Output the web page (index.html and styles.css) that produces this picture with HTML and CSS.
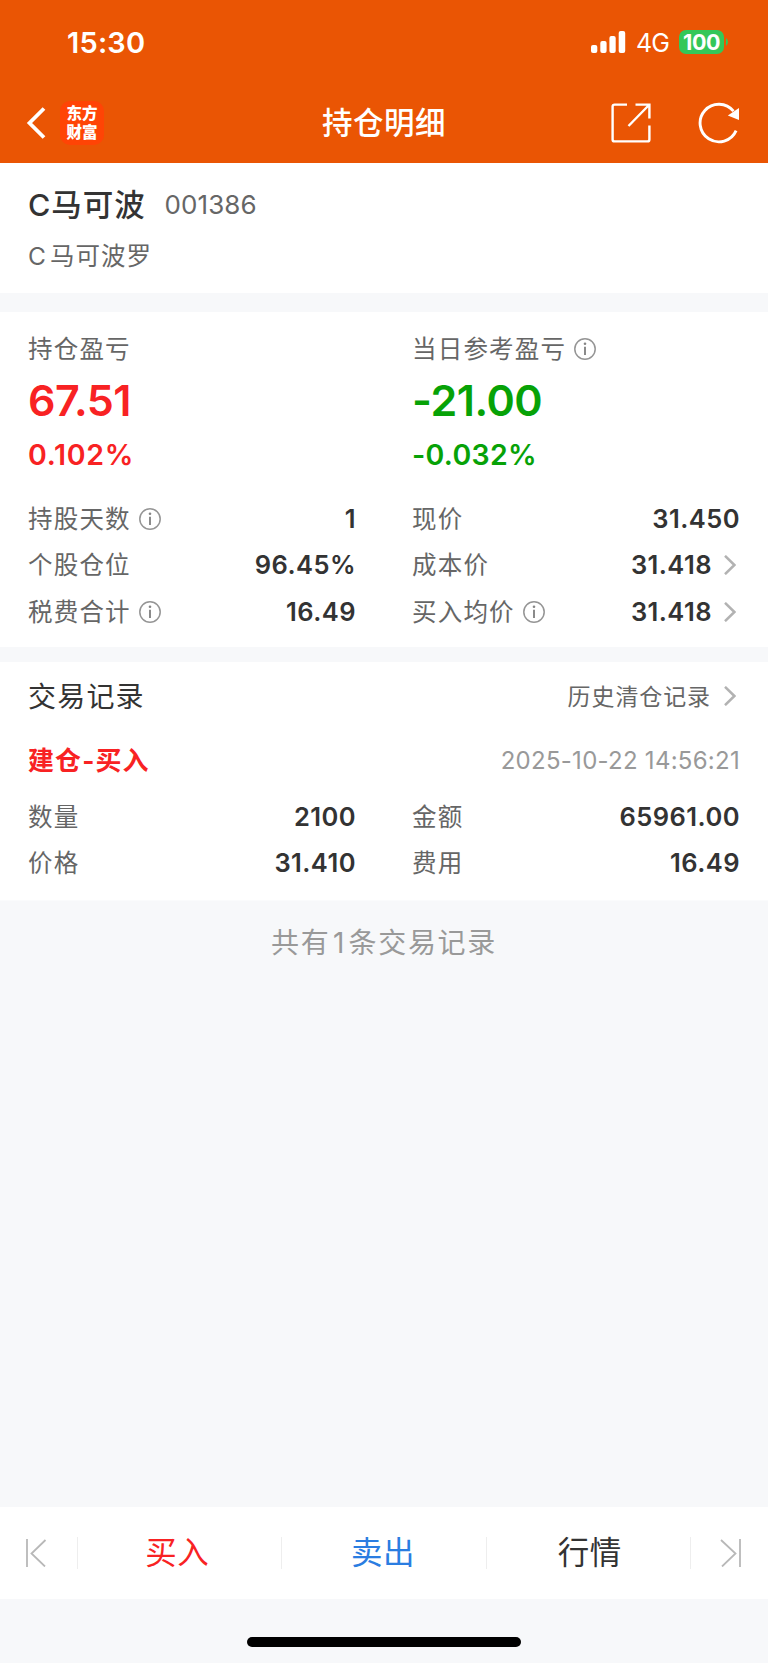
FILE: index.html
```html
<!DOCTYPE html>
<html lang="zh-CN">
<head>
<meta charset="utf-8">
<title>持仓明细</title>
<link rel="stylesheet" href="styles.css">
</head>
<body>
<svg class="defs" width="0" height="0">
  <symbol id="info" viewBox="0 0 22 22"><circle cx="11" cy="11" r="10.2" fill="none" stroke="#959595" stroke-width="1.5"/><path d="M11 8.8V17" stroke="#858585" stroke-width="1.9"/><circle cx="11" cy="5.7" r="1.3" fill="#858585"/></symbol>
  <symbol id="chev" viewBox="0 0 12 20"><path d="M1 .8L10.4 10L1 19.2" fill="none" stroke="#b2b2b2" stroke-width="2.5"/></symbol>
</svg>
<header class="header">
  <div class="status">
    <span class="time">15:30</span>
    <svg class="signal" width="35" height="22" viewBox="0 0 35 22" fill="#fff"><rect x="0" y="14" width="6.3" height="8" rx="2"/><rect x="9.3" y="10" width="6.3" height="12" rx="2"/><rect x="18.4" y="5" width="6.3" height="17" rx="2"/><rect x="27.7" y="0" width="6.5" height="22" rx="2"/></svg>
    <span class="net">4G</span>
    <span class="battery">100</span>
    <svg class="cap" width="2" height="8" viewBox="0 0 2 8"><path d="M0 0Q2 1.6 2 4T0 8Z" fill="#34c759"/></svg>
  </div>
  <nav class="nav">
    <div class="nav-left">
      <svg width="20" height="34" viewBox="0 0 20 34"><path d="M18 2.5L3.5 17L18 31.5" fill="none" stroke="#fff" stroke-width="3.8"/></svg>
      <div class="logo"><span>东方</span><span>财富</span></div>
    </div>
    <h1 class="title">持仓明细</h1>
    <div class="nav-right">
      <svg width="40" height="40" viewBox="0 0 40 40" fill="none" stroke="#fff" stroke-width="2.4"><path d="M16 1.6H3.6Q1.6 1.6 1.6 3.6V36.4Q1.6 38.4 3.6 38.4H36.4Q38.4 38.4 38.4 36.4V22.5M24.5 1.6H38.4V15.5M38 2L17.5 23"/></svg>
      <svg width="42" height="42" viewBox="0 0 42 42"><path d="M38.1 28.6A18.8 18.8 0 1 1 35.5 9.2" fill="none" stroke="#fff" stroke-width="2.9"/><path d="M41 6V18L29.8 13.6Z" fill="#fff"/></svg>
    </div>
  </nav>
</header>
<section class="stock">
  <div class="stock-head"><span class="stock-name">C马可波</span><span class="code">001386</span></div>
  <div class="full-name"><span class="latin">C</span>马可波罗</div>
</section>
<section class="position">
  <div class="cols">
    <div class="gain up">
      <div class="label">持仓盈亏</div><div class="big">67.51</div><div class="pct">0.102%</div>
    </div>
    <div class="gain down">
      <div class="label">当日参考盈亏<svg class="info"><use href="#info"/></svg></div><div class="big">-21.00</div><div class="pct">-0.032%</div>
    </div>
  </div>
  <div class="cols rows">
    <div class="row"><span class="label">持股天数<svg class="info"><use href="#info"/></svg></span><b>1</b></div>
    <div class="row"><span class="label">现价</span><b>31.450</b></div>
    <div class="row"><span class="label">个股仓位</span><b>96.45%</b></div>
    <div class="row"><span class="label">成本价</span><b>31.418</b><svg class="chev"><use href="#chev"/></svg></div>
    <div class="row"><span class="label">税费合计<svg class="info"><use href="#info"/></svg></span><b>16.49</b></div>
    <div class="row"><span class="label">买入均价<svg class="info"><use href="#info"/></svg></span><b>31.418</b><svg class="chev"><use href="#chev"/></svg></div>
  </div>
</section>
<section class="records">
  <div class="rec-head"><h2>交易记录</h2><span class="history">历史清仓记录</span><svg class="chev"><use href="#chev"/></svg></div>
  <div class="rec-line"><span class="kind">建仓-买入</span><time>2025-10-22 14:56:21</time></div>
  <div class="cols rows">
    <div class="row"><span class="label">数量</span><b>2100</b></div>
    <div class="row"><span class="label">金额</span><b>65961.00</b></div>
    <div class="row"><span class="label">价格</span><b>31.410</b></div>
    <div class="row"><span class="label">费用</span><b>16.49</b></div>
  </div>
</section>
<p class="total">共有<span>1</span>条交易记录</p>
<footer class="footer">
  <div class="tabs">
    <div class="edge"><svg width="22" height="28" viewBox="0 0 22 28" fill="none" stroke="#b8b8b8" stroke-width="1.8"><path d="M2 0V28M20.5 1L6.5 14.5L20 27.5"/></svg></div>
    <div class="tab buy">买入</div>
    <div class="tab sell">卖出</div>
    <div class="tab quote">行情</div>
    <div class="edge last"><svg width="22" height="28" viewBox="0 0 22 28" fill="none" stroke="#b8b8b8" stroke-width="1.8"><path d="M20 0V28M1 1L15.5 14.5L2 27.5"/></svg></div>
  </div>
  <div class="home"></div>
</footer>
</body>
</html>
```
FILE: styles.css
```css
* { box-sizing: border-box; margin: 0; padding: 0; }
body {
  width: 768px; height: 1663px; display: flex; flex-direction: column;
  background: #f7f8fa; color: #333; overflow: hidden;
  font-family: Inter, "Noto Sans CJK SC", sans-serif; font-size: 25px;
}
svg { display: block; flex: none; }
.defs { position: absolute; }
.header { height: 163.4px; background: #ea5504; color: #fff; flex: none; }
.status { height: 84px; display: flex; align-items: center; padding: 0 40px 0 67px; }
.time { font-size: 29px; font-weight: 600; letter-spacing: 0.2px; margin: 2px auto 0 0; line-height: 40px; }
.net { font-size: 25px; line-height: 30px; margin: 2px 0 0 10px; width: 33px; white-space: nowrap; letter-spacing: -.8px; }
.battery { width: 45px; height: 24px; margin-left: 10px; border-radius: 7px; background: #34c759; font-size: 21.5px; font-weight: 700; line-height: 24px; text-align: center; letter-spacing: -.5px; }
.cap { margin-left: 2px; }
.nav { height: 77px; display: grid; grid-template-columns: 1fr auto 1fr; align-items: center; padding: 0 28px 0 26px; }
.nav-left { display: flex; align-items: center; gap: 14px; }
.logo { width: 44px; height: 44px; border-radius: 10px; background: #ff4405; display: flex; flex-direction: column; align-items: center; justify-content: center; }
.logo span { font-size: 15.5px; font-weight: 900; line-height: 19px; }
.title { font-size: 30.5px; font-weight: 500; letter-spacing: .5px; line-height: 40px; padding-left: 2px; }
.nav-right { display: flex; justify-content: flex-end; align-items: center; gap: 47px; padding-top: 1px; }
.stock { height: 129.6px; background: #fff; padding: 19px 28px 0; flex: none; }
.stock-head { display: flex; align-items: center; height: 42px; }
.stock-name { font-size: 30.5px; font-weight: 500; letter-spacing: 1px; width: 136.5px; white-space: nowrap; }
.code { font-size: 26px; color: #666; letter-spacing: 0.1px; padding-top: 2px; }
.full-name { font-size: 24.5px; color: #666; line-height: 30px; margin-top: 17px; letter-spacing: 1px; }
.latin { display: inline-block; width: 22px; }
.position { margin-top: 19px; background: #fff; height: 335.5px; padding: 21px 28px 0; flex: none; }
.cols { display: grid; grid-template-columns: 328px 328px; column-gap: 56px; }
.label { color: #666; font-size: 24.5px; line-height: 32px; letter-spacing: 1.2px; display: flex; align-items: center; white-space: nowrap; }
.info { width: 22px; height: 22px; margin-left: 8px; }
.big { font-size: 43px; font-weight: 600; line-height: 52px; margin-top: 9px; letter-spacing: -.5px; }
.pct { font-size: 28.5px; font-weight: 600; line-height: 36px; margin-top: 11px; letter-spacing: .3px; }
.up .pct { letter-spacing: .7px; }
.up, .kind { color: #f82223; }
.down .big, .down .pct { color: #07a207; }
.rows { margin-top: 22.6px; grid-auto-rows: 46.4px; }
.row { display: flex; align-items: center; }
.row b { margin-left: auto; font-size: 25.5px; font-weight: 600; line-height: 32px; letter-spacing: .45px; }
.chev { width: 12px; height: 20px; margin: 0 4px 0 12px; }
.records { margin-top: 15px; height: 238.5px; background: #fff; padding: 13px 28px 0; flex: none; border-bottom: 1px solid #fafbfc; }
.rec-head { display: flex; align-items: center; height: 40px; }
.rec-head .chev { margin-top: 1px; }
h2 { font-size: 28px; font-weight: 400; letter-spacing: 1.2px; margin-right: auto; }
.history { font-size: 23px; color: #666; letter-spacing: .9px; padding-right: 1px; }
.rec-line { display: flex; align-items: center; justify-content: space-between; height: 40px; margin-top: 25px; }
.kind { font-size: 26px; font-weight: 700; letter-spacing: 1.1px; line-height: 36px; margin-top: 2px; }
time { font-size: 24px; color: #999; letter-spacing: .27px; padding-top: 1px; }
.records .rows { margin-top: 13px; }
.total { text-align: center; font-size: 28px; line-height: 40px; color: #999; margin-top: 22px; letter-spacing: 1.7px; }
.total span { margin: 0 2.5px; }
.footer { margin-top: auto; height: 156px; flex: none; }
.tabs { height: 92px; background: #fff; display: flex; align-items: center; }
.edge { width: 77px; padding-left: 25px; }
.edge.last { padding-left: 29px; }
.tab { height: 32px; line-height: 32px; width: 206px; text-align: center; font-size: 31.5px; letter-spacing: .5px; border-left: 1px solid #eee; }
.tab.buy { width: 204px; padding-right: 4px; }
.tab.quote { width: 205px; border-right: 1px solid #eee; padding-left: 2px; }
.tab.sell { padding-right: 2px; }
.buy { color: #f82223; }
.sell { color: #2a7de1; }
.home { width: 274px; height: 10px; border-radius: 5px; background: #000; margin: 38px auto 0; }
```
